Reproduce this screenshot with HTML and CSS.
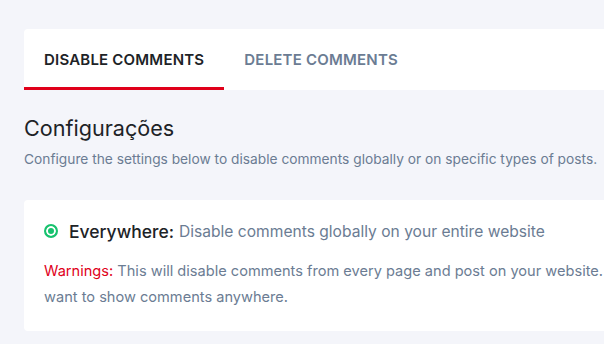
FILE: index.html
```html
<!doctype html>
<html lang="pt">
<head>
    <meta charset="UTF-8">
    <title>Disable Comments</title>
    <link rel="stylesheet" href="styles.css">
</head>
<body>
<div id="app">
    <nav class="tabs">
        <div class="tab active">DISABLE COMMENTS</div>
        <div class="tab">DELETE COMMENTS</div>
    </nav>

    <section class="settings">
        <h2 class="title">Configurações</h2>
        <p class="desc">Configure the settings below to disable comments globally or on specific types of posts.</p>
    </section>

    <div class="option">
        <label class="option-head">
            <span class="radio"></span>
            <span class="name">Everywhere:</span>
            <span class="hint">Disable comments globally on your entire website</span>
        </label>
        <p class="warning"><span class="warn-label">Warnings:</span> This will disable comments from every page and post on your website. Use this setting if you do not want to show comments anywhere.</p>
    </div>
</div>
</body>
</html>
```

FILE: styles.css
```css
* {
    margin: 0;
    padding: 0;
    box-sizing: border-box;
}

html, body {
    width: 100%;
    height: 100%;
    overflow: hidden;
}

body {
    background: #f4f5fa;
    font-family: Inter, "Noto Sans", sans-serif;
    color: #1d2327;
}

#app {
    padding: 29px 0 0 24px;
    width: 860px;
}

.tabs {
    display: flex;
    height: 61px;
    background: #fff;
    border-radius: 4px 0 0 0;
}

.tab {
    display: flex;
    align-items: center;
    padding: 3px 20px 0;
    font-size: 15px;
    font-weight: 600;
    letter-spacing: 0.2px;
    color: #6b7c93;
    border-bottom: 3px solid transparent;
}

.tab.active {
    color: #1d2327;
    border-bottom-color: #e0001a;
}

.settings {
    padding-top: 24px;
}

.title {
    font-size: 21.6px;
    font-weight: 400;
    line-height: 28px;
}

.desc {
    margin-top: 7px;
    font-size: 13.75px;
    line-height: 20px;
    color: #6b7c93;
}

.option {
    margin-top: 31px;
    background: #fff;
    border-radius: 4px 0 0 4px;
    height: 131px;
    padding: 19px 20px 0 20px;
}

.option-head {
    display: flex;
    align-items: center;
    height: 24px;
}

.radio {
    width: 14px;
    height: 14px;
    border-radius: 50%;
    border: 2px solid #17c26e;
    background: #17c26e;
    box-shadow: inset 0 0 0 2px #fff;
    margin-right: 11px;
}

.name {
    font-size: 17.5px;
    font-weight: 500;
    color: #1d2327;
    margin-right: 5px;
}

.hint {
    font-size: 15.6px;
    color: #6b7c93;
}

.warning {
    margin-top: 15px;
    font-size: 14.6px;
    line-height: 26px;
    color: #6b7c93;
    width: 780px;
}

.warn-label {
    color: #e0001a;
}
```
